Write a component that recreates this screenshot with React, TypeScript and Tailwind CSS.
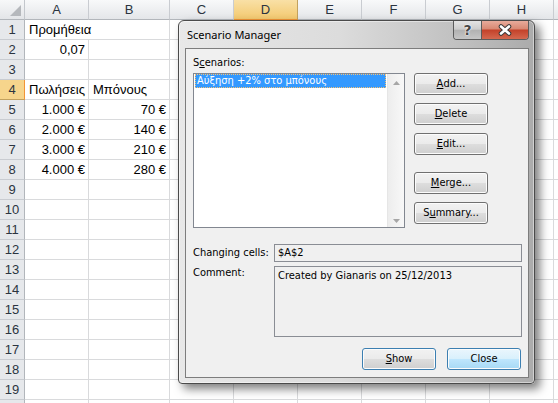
import { Fragment } from "react";
import type { ReactNode } from "react";

type Cell = { text: string; right?: boolean; spill?: boolean };

// column I and row 20 are only a few pixels wide/tall in the window, so no label
const COLS = ["A", "B", "C", "D", "E", "F", "G", "H", "I"];
const ROWS = Array.from({ length: 20 }, (_, i) => i + 1);
const VISIBLE_COLS = 8;
const VISIBLE_ROWS = 19;
const SELECTED_COL = "D";
const SELECTED_ROW = 4;

const DATA: Record<string, Cell> = {
  A1: { text: "Προμήθεια", spill: true },
  A2: { text: "0,07", right: true },
  A4: { text: "Πωλήσεις" },
  B4: { text: "Μπόνους" },
  A5: { text: "1.000 €", right: true },
  B5: { text: "70 €", right: true },
  A6: { text: "2.000 €", right: true },
  B6: { text: "140 €", right: true },
  A7: { text: "3.000 €", right: true },
  B7: { text: "210 €", right: true },
  A8: { text: "4.000 €", right: true },
  B8: { text: "280 €", right: true },
};

const btnBase =
  "h-[22px] rounded-[3px] border flex items-center justify-center text-[11px] text-black shadow-[inset_0_0_0_1px_#fcfcfc]";
const btnGray =
  "border-[#707070] bg-[linear-gradient(#f2f2f2_0%,#ebebeb_48%,#dddddd_52%,#cfcfcf_100%)]";
const btnFocus =
  "border-[#3c7fb1] bg-[linear-gradient(#f2f2f2_0%,#ebebeb_48%,#dddddd_52%,#cfcfcf_100%)]";
const btnDefault =
  "border-[#3c7fb1] bg-[linear-gradient(#eaf6fd_0%,#d9f0fc_48%,#bee6fd_52%,#a7d9f5_100%)]";

function Btn({ children, className }: { children: ReactNode; className: string }) {
  return <div className={`${btnBase} ${className}`}>{children}</div>;
}

function Sheet() {
  return (
    <div className="grid grid-cols-[25px_64px_81px_64px_64px_64px_64px_64px_64px_64px] auto-rows-[20px] font-['Liberation_Sans',Arial,sans-serif] text-[13px] text-black">
      {/* select-all corner */}
      <div className="flex items-end justify-end p-[3px] border-r border-b border-r-[#c3c7cc] border-b-[#b2b6bb] bg-[linear-gradient(#f7f8f9,#e3e5e8)]">
        <svg width="11" height="11" viewBox="0 0 11 11">
          <polygon points="11,0 11,11 0,11" fill="#b5b8bc" />
        </svg>
      </div>
      {COLS.map((c, i) => (
        <div
          key={c}
          className={
            c === SELECTED_COL
              ? "flex items-center justify-center border-r border-b border-r-[#c2a15e] border-b-[#f29436] bg-[linear-gradient(#f9e0a6,#f3c96f)] text-[#2b3440]"
              : "flex items-center justify-center border-r border-b border-r-[#c9ccd1] border-b-[#b2b6bb] bg-[linear-gradient(#f8f9fa,#e4e6e9)] text-[#2b3440]"
          }
        >
          {i < VISIBLE_COLS ? c : ""}
        </div>
      ))}
      {ROWS.map((r) => (
        <Fragment key={r}>
          <div
            className={
              r === SELECTED_ROW
                ? "flex items-center justify-center border-r border-b border-r-[#f29436] border-b-[#c2a15e] bg-[#f6d58c] text-[#2b3440]"
                : "flex items-center justify-center border-r border-b border-r-[#b2b6bb] border-b-[#c9ccd1] bg-[#e6e8eb] text-[#2b3440]"
            }
          >
            {r <= VISIBLE_ROWS ? r : ""}
          </div>
          {COLS.map((c) => {
            const cell = DATA[`${c}${r}`];
            return (
              <div
                key={c}
                className={`flex items-center whitespace-nowrap border-b border-[#d9dadc] px-[3px] leading-[19px] ${
                  cell?.spill ? "relative z-10 overflow-visible" : "border-r overflow-hidden"
                } ${cell?.right ? "justify-end" : "justify-start pl-[4px]"}`}
              >
                {cell?.text}
              </div>
            );
          })}
        </Fragment>
      ))}
    </div>
  );
}

function ScrollBar() {
  return (
    <div className="w-[17px] shrink-0 flex flex-col justify-between items-center pt-[7px] pb-[4px] border-l border-[#e6e6e6] bg-[linear-gradient(90deg,#ededed,#f8f8f8)]">
      <svg width="7" height="4" viewBox="0 0 7 4">
        <polygon points="3.5,0 7,4 0,4" fill="#a6a6a6" />
      </svg>
      <svg width="7" height="4" viewBox="0 0 7 4">
        <polygon points="0,0 7,0 3.5,4" fill="#a6a6a6" />
      </svg>
    </div>
  );
}

function CaptionButtons() {
  return (
    <div className="ml-auto mr-[5px] flex h-[19px] overflow-hidden rounded-b-[4px] border border-t-0 border-[#5c5c5c]">
      <div className="w-[27px] flex items-center justify-center bg-[linear-gradient(#e4e4e4_0%,#cdcdcd_45%,#b2b2b2_52%,#c6c6c6_100%)]">
        <span className="font-['DejaVu_Sans',sans-serif] text-[14px] font-bold leading-none text-[#474747] [text-shadow:0_0_1px_#fff,0_0_1px_#fff,0_0_2px_#fff]">
          ?
        </span>
      </div>
      <div className="w-[47px] flex items-center justify-center border-l border-[#5c5c5c] bg-[linear-gradient(#e8ab9b_0%,#d98a75_42%,#c4432b_52%,#d4684f_100%)]">
        <svg width="14" height="12" viewBox="0 0 14 12">
          <path d="M3 2.5 L11 9.5 M11 2.5 L3 9.5" stroke="#3a3a3a" strokeWidth="4.6" strokeLinecap="round" />
          <path d="M3 2.5 L11 9.5 M11 2.5 L3 9.5" stroke="#ffffff" strokeWidth="2.6" strokeLinecap="round" />
        </svg>
      </div>
    </div>
  );
}

function ScenarioManager() {
  return (
    <div className="absolute left-[178px] top-[20px] z-20 w-[357px] h-[364px] flex flex-col rounded-t-[6px] rounded-b-[4px] border border-[#4a4a4a] bg-[linear-gradient(90deg,#e8e8e8_0%,#dcdcdc_45%,#bfbfbf_80%,#ababab_100%)] shadow-[5px_5px_10px_rgba(0,0,0,0.5),inset_0_0_0_1px_rgba(255,255,255,0.45)]">
      <div className="h-[27px] shrink-0 flex items-start">
        <span className="pl-[8px] pt-[6px] leading-[16px] font-['Noto_Sans',sans-serif] text-[11px] text-black">
          Scenario Manager
        </span>
        <CaptionButtons />
      </div>

      <div className="ml-[6px] mr-[5px] mb-[5px] flex-1 flex flex-col border border-[#7d7d7d] bg-[#f0f0f0] pl-[7px] pr-[6px] pt-[7px] font-['DejaVu_Sans_Condensed','DejaVu_Sans',sans-serif] text-[11px] text-black">
        <div className="h-[14px] leading-[14px]">
          S<span className="underline">c</span>enarios:
        </div>

        <div className="mt-[3px] flex items-start">
          <div className="w-[212px] h-[155px] flex border border-[#828790] bg-white">
            <div className="flex-1 px-[1px]">
              <div className="h-[14px] flex items-center pl-[2px] bg-[#3399ff] text-white outline-1 outline-dotted outline-[#f3c27a] -outline-offset-1">
                Αύξηση +2% στο μπόνους
              </div>
            </div>
            <ScrollBar />
          </div>

          <div className="ml-[9px] w-[74px] flex flex-col">
            <Btn className={btnGray}>
              <span className="underline">A</span>dd...
            </Btn>
            <Btn className={`${btnGray} mt-[8px]`}>
              <span className="underline">D</span>elete
            </Btn>
            <Btn className={`${btnGray} mt-[8px]`}>
              <span className="underline">E</span>dit...
            </Btn>
            <Btn className={`${btnGray} mt-[17px]`}>
              <span className="underline">M</span>erge...
            </Btn>
            <Btn className={`${btnGray} mt-[8px]`}>
              S<span className="underline">u</span>mmary...
            </Btn>
          </div>
        </div>

        <div className="mt-[16px] flex items-center">
          <div className="w-[81px] shrink-0">Changing cells:</div>
          <div className="flex-1 h-[18px] flex items-center pl-[3px] border border-[#8a8d94] bg-[#f0f0f0]">$A$2</div>
        </div>

        <div className="mt-[4px] flex items-start">
          <div className="w-[81px] shrink-0 leading-[14px]">Comment:</div>
          <div className="flex-1 h-[71px] pl-[3px] pt-[2px] leading-[14px] border border-[#8a8d94] bg-[#f0f0f0]">
            Created by Gianaris on 25/12/2013
          </div>
        </div>

        <div className="mt-[11px] flex justify-end gap-[11px] pr-[1px]">
          <Btn className={`${btnFocus} w-[74px] h-[21px]`}>
            <span className="underline">S</span>how
          </Btn>
          <Btn className={`${btnDefault} w-[74px] h-[21px]`}>Close</Btn>
        </div>
      </div>
    </div>
  );
}

export default function App() {
  return (
    <div className="relative w-[558px] h-[403px] overflow-hidden bg-white">
      <Sheet />
      <ScenarioManager />
    </div>
  );
}
